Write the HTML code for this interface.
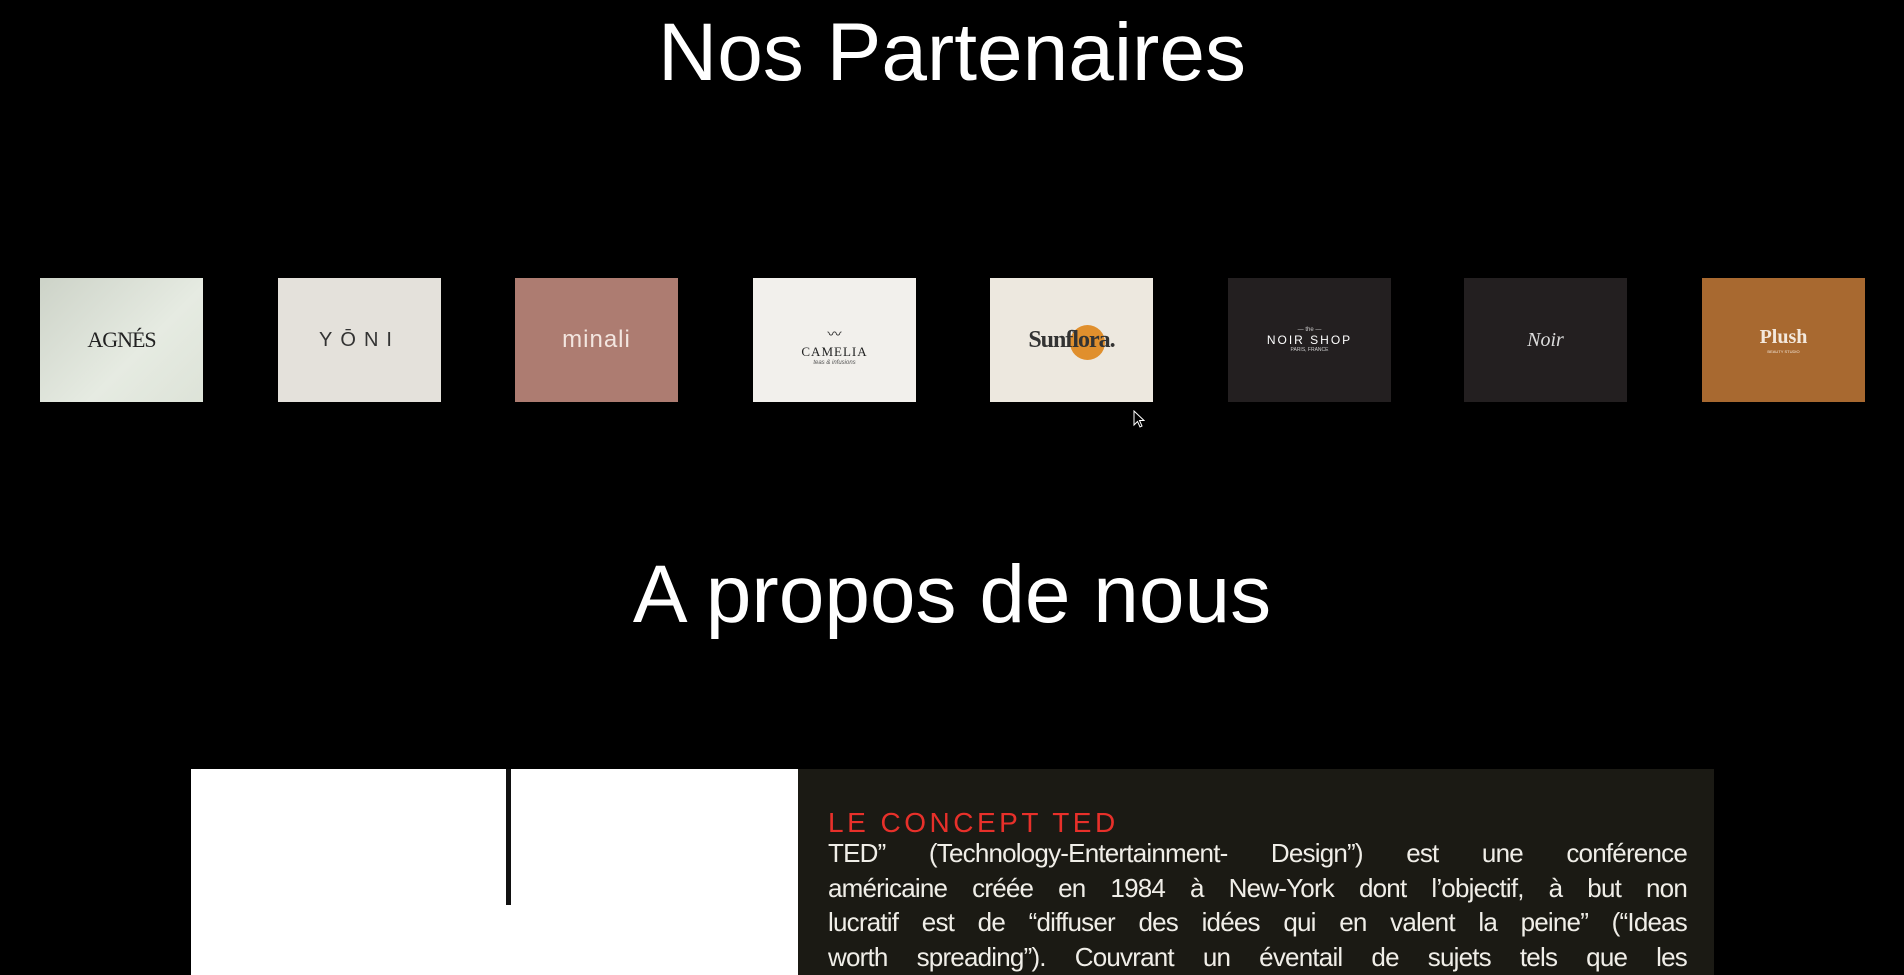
<!DOCTYPE html>
<html><head><meta charset="utf-8"><style>
html,body{margin:0;padding:0;background:#000;width:1904px;height:975px;overflow:hidden;font-family:"Liberation Sans",sans-serif;}
.h{position:absolute;left:0;width:1904px;text-align:center;color:#fff;font-size:82px;line-height:1;}
.card{position:absolute;top:278px;width:163px;height:124px;display:flex;align-items:center;justify-content:center;flex-direction:column;}
.img{position:absolute;left:191px;top:769px;width:1523px;height:206px;background:#1b1a14;overflow:hidden;}
.white{position:absolute;left:0;top:0;width:607px;height:206px;background:#fff;}
.line{position:absolute;left:315px;top:0;width:5px;height:136px;background:#111;}
.tx{position:absolute;left:637px;width:859px;color:#f0eee8;font-size:26px;line-height:34.5px;letter-spacing:-0.8px;}
.tx div{text-align:justify;text-align-last:justify;white-space:nowrap;}
</style></head><body>
<div class="h" style="top:12px">Nos Partenaires</div>
<div class="h" style="top:554px">A propos de nous</div>

<div class="card" style="left:40px;background:linear-gradient(135deg,#cdd3c8,#e6ebe2 60%,#dde3d8);"><span style="font-family:'Liberation Serif',serif;font-size:22px;color:#222;letter-spacing:-1px">AGNÉS</span></div>
<div class="card" style="left:278px;background:#e4e1db;"><span style="font-size:20px;color:#333;letter-spacing:8px;font-weight:300">YŌNI</span></div>
<div class="card" style="left:515px;background:#ad7c71;"><span style="font-size:24px;color:#f3e6e0;letter-spacing:1px">minali</span></div>
<div class="card" style="left:753px;background:#f2f0ec;"><span style="font-size:14px;color:#222;margin-top:10px">〰</span><span style="font-family:'Liberation Serif',serif;font-size:13px;color:#222;letter-spacing:1px">CAMELIA</span><span style="font-size:6px;color:#555;font-style:italic">teas &amp; infusions</span></div>
<div class="card" style="left:990px;background:#ede8df;"><span style="position:absolute;left:80px;top:47px;width:35px;height:35px;border-radius:50%;background:#e08f2d"></span><span style="position:relative;font-family:'Liberation Serif',serif;font-weight:bold;font-size:24px;color:#333;letter-spacing:-1px">Sunflora.</span></div>
<div class="card" style="left:1228px;background:#231f20;"><span style="font-size:6px;color:#ccc">— the —</span><span style="font-size:12px;color:#fff;letter-spacing:2px">NOIR SHOP</span><span style="font-size:5px;color:#ccc">PARIS, FRANCE</span></div>
<div class="card" style="left:1464px;background:#231f20;"><span style="font-family:'Liberation Serif',serif;font-style:italic;font-size:20px;color:#ddd">Noir</span></div>
<div class="card" style="left:1702px;background:#a86930;"><span style="font-family:'Liberation Serif',serif;font-weight:bold;font-size:20px;color:#f3e8dc">Plush</span><span style="font-size:4px;color:#f3e8dc">BEAUTY STUDIO</span></div>

<svg style="position:absolute;left:1133px;top:410px" width="12" height="18" viewBox="0 0 12 18"><path d="M1 1 L1 15 L4.5 11.5 L7 17 L9 16 L6.5 10.5 L11 10.5 Z" fill="#000" stroke="#fff" stroke-width="1"/></svg>

<div class="img">
<div class="white"></div><div class="line"></div>
<div style="position:absolute;left:637px;top:38px;color:#e8302a;font-size:28px;letter-spacing:3.5px;">LE CONCEPT TED</div>
<div class="tx" style="top:67px">
<div>TED” (Technology-Entertainment- Design”) est une conférence</div>
<div>américaine créée en 1984 à New-York dont l’objectif, à but non</div>
<div>lucratif est de “diffuser des idées qui en valent la peine” (“Ideas</div>
<div>worth spreading”). Couvrant un éventail de sujets tels que les</div>
</div>
</div>
</body></html>
